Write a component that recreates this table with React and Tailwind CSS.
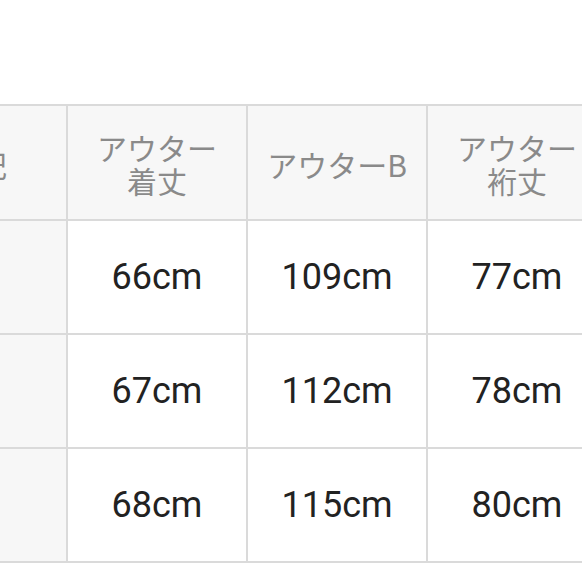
import React from "react";

const headers = ["表記", "アウター\n着丈", "アウターB", "アウター\n裄丈"];
const rows = [
  ["", "66cm", "109cm", "77cm"],
  ["", "67cm", "112cm", "78cm"],
  ["", "68cm", "115cm", "80cm"],
];

export default function App() {
  return (
    <div className="w-[582px] h-[582px] overflow-hidden bg-white">
      <div className="ml-[-112px] mt-[104px] w-[720px] grid grid-cols-[180px_180px_180px_180px] border-t-2 border-[#dadada]">
        {headers.map((h, i) => (
          <div
            key={i}
            className="h-[115px] bg-[#f7f7f7] border-r-2 border-b-2 border-[#dadada] flex items-center justify-center text-center whitespace-pre-line text-[30px] leading-[33px] text-[#8a8a8a] pt-[3px]"
            style={{ fontFamily: '"Noto Sans CJK JP", "Noto Sans", sans-serif' }}
          >
            {h}
          </div>
        ))}
        {rows.map((r, ri) =>
          r.map((c, ci) => (
            <div
              key={ri + "-" + ci}
              className={
                "h-[114px] border-r-2 border-b-2 border-[#dadada] flex items-center justify-center text-[36px] text-[#222]" +
                (ci === 0 ? " bg-[#f7f7f7]" : " bg-white")
              }
              style={{ fontFamily: "Roboto, sans-serif" }}
            >
              {c}
            </div>
          ))
        )}
      </div>
    </div>
  );
}
